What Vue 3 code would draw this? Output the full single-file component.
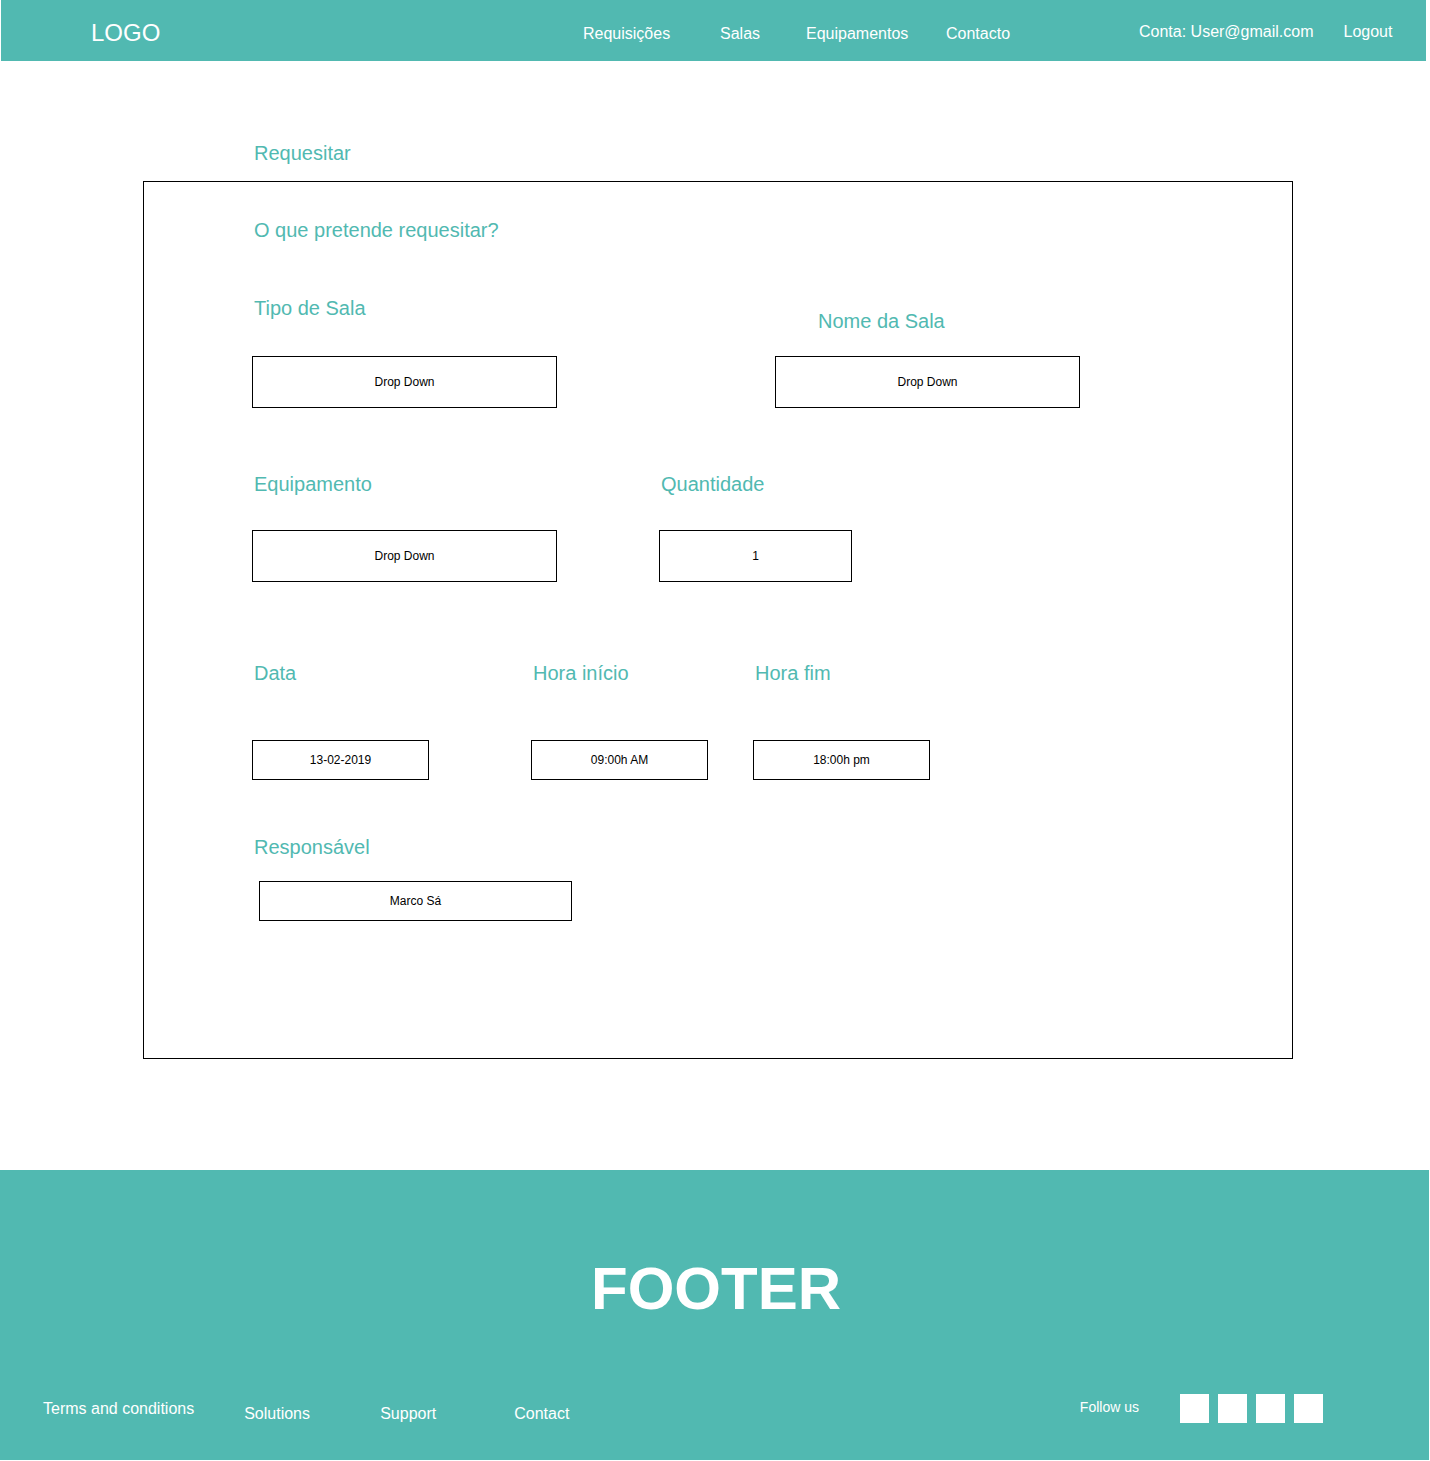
<script setup>
import { ref } from 'vue'

const navLinks = ['Requisições', 'Salas', 'Equipamentos', 'Contacto']
const footerLinks = ['Solutions', 'Support', 'Contact']
const networks = ['Facebook', 'Twitter', 'Instagram', 'LinkedIn']

const roomType = ref('Drop Down')
const roomName = ref('Drop Down')
const equipment = ref('Drop Down')
const quantity = ref('1')
const date = ref('13-02-2019')
const startTime = ref('09:00h AM')
const endTime = ref('18:00h pm')
const owner = ref('Marco Sá')
</script>

<template>
  <div class="page">
    <header class="topbar">
      <a class="logo" href="#">LOGO</a>
      <nav class="topnav">
        <a v-for="link in navLinks" :key="link" href="#">{{ link }}</a>
      </nav>
      <div class="account">
        <span>Conta: User@gmail.com</span>
        <a href="#">Logout</a>
      </div>
    </header>

    <main class="content">
      <h1 class="heading">Requesitar</h1>
      <form class="panel" @submit.prevent>
        <h2 class="heading">O que pretende requesitar?</h2>

        <div class="row row-room">
          <div class="field">
            <label for="room-type">Tipo de Sala</label>
            <select id="room-type" v-model="roomType" class="control wide tall">
              <option>Drop Down</option>
            </select>
          </div>
          <div class="field field-name">
            <label for="room-name">Nome da Sala</label>
            <select id="room-name" v-model="roomName" class="control wide tall">
              <option>Drop Down</option>
            </select>
          </div>
        </div>

        <div class="row row-equipment">
          <div class="field">
            <label for="equipment">Equipamento</label>
            <select id="equipment" v-model="equipment" class="control wide tall">
              <option>Drop Down</option>
            </select>
          </div>
          <div class="field">
            <label for="quantity">Quantidade</label>
            <input id="quantity" v-model="quantity" class="control medium tall" type="text" inputmode="numeric">
          </div>
        </div>

        <div class="row row-schedule">
          <div class="field">
            <label for="date">Data</label>
            <input id="date" v-model="date" class="control narrow" type="text">
          </div>
          <div class="hours">
            <div class="field">
              <label for="start">Hora início</label>
              <input id="start" v-model="startTime" class="control narrow" type="text">
            </div>
            <div class="field">
              <label for="end">Hora fim</label>
              <input id="end" v-model="endTime" class="control narrow" type="text">
            </div>
          </div>
        </div>

        <div class="row row-owner">
          <div class="field">
            <label for="owner">Responsável</label>
            <input id="owner" v-model="owner" class="control" type="text">
          </div>
        </div>
      </form>
    </main>

    <footer class="footer">
      <p class="footer-title">FOOTER</p>
      <div class="footer-bar">
        <a class="terms" href="#">Terms and conditions</a>
        <nav class="footer-links">
          <a v-for="link in footerLinks" :key="link" href="#">{{ link }}</a>
        </nav>
        <div class="social">
          <span>Follow us</span>
          <div class="networks">
            <a v-for="name in networks" :key="name" href="#" :aria-label="name"></a>
          </div>
        </div>
      </div>
    </footer>
  </div>
</template>

<style>
body {
  background: #fff;
}
</style>

<style scoped>
.page {
  --teal: #51b9b1;
  font-family: "Liberation Sans", Arial, sans-serif;
  font-size: 16px;
  line-height: 20px;
  color: #000;
}

.page *,
.page *::before {
  box-sizing: border-box;
}

a {
  color: inherit;
  text-decoration: none;
}

.topbar {
  display: grid;
  grid-template-columns: 492fr 556fr 287fr;
  align-items: center;
  min-height: 61px;
  margin: 0 4px 0 1px;
  padding: 5px 0 0 90px;
  background: var(--teal);
  color: #fff;
}

.logo {
  font-size: 24px;
  line-height: 28px;
}

.topnav {
  display: grid;
  grid-template-columns: 137px 86px 140px auto;
  justify-content: start;
  padding-top: 2px;
}

.account {
  display: flex;
  gap: 30px;
  padding-bottom: 2px;
  white-space: nowrap;
}

.content {
  padding: 80px 137px 111px 143px;
}

.heading,
.field label {
  margin: 0;
  padding-left: 2px;
  font-size: 20px;
  font-weight: 400;
  line-height: 24px;
  color: var(--teal);
}

.content > .heading {
  margin: 0 0 16px 109px;
}

.panel {
  padding: 36px 108px 137px;
  border: 1px solid #000;
}

.row,
.hours {
  display: flex;
  align-items: flex-end;
}

.field {
  display: flex;
  flex-direction: column;
  gap: 36px;
}

.row-room {
  gap: 218px;
  margin-top: 54px;
}

.field-name {
  gap: 23px;
}

.field-name label {
  padding-left: 43px;
}

.row-equipment {
  gap: 102px;
  margin-top: 64px;
}

.row-equipment .field {
  gap: 34px;
}

.row-schedule {
  gap: 102px;
  margin-top: 79px;
}

.row-schedule .field {
  gap: 55px;
}

.hours {
  gap: 45px;
}

.row-owner {
  margin-top: 55px;
}

.row-owner .field {
  gap: 22px;
}

.row-owner .control {
  width: 313px;
  margin-left: 7px;
}

.control {
  appearance: none;
  height: 40px;
  margin: 0;
  padding: 0;
  border: 1px solid #000;
  border-radius: 0;
  background: #fff;
  color: #000;
  font-family: inherit;
  font-size: 12px;
  text-align: center;
  text-align-last: center;
}

.tall {
  height: 52px;
}

.wide {
  width: 305px;
}

.medium {
  width: 193px;
}

.narrow {
  width: 177px;
}

.footer {
  margin-right: 1px;
  padding: 83px 106px 37px 43px;
  background: var(--teal);
  color: #fff;
}

.footer-title {
  margin: 0 -66px 69px 0;
  font-size: 60px;
  font-weight: 700;
  line-height: 72px;
  text-align: center;
}

.footer-bar {
  display: flex;
  align-items: center;
  height: 29px;
}

.footer-links {
  display: grid;
  grid-template-columns: 136px 134px auto;
  margin-left: 50px;
  padding-top: 10px;
}

.social {
  display: flex;
  align-items: flex-start;
  gap: 41px;
  margin-left: auto;
  font-size: 14px;
  line-height: 26px;
}

.networks {
  display: flex;
  gap: 9px;
}

.networks a {
  width: 29px;
  height: 29px;
  background: #fff;
}
</style>
